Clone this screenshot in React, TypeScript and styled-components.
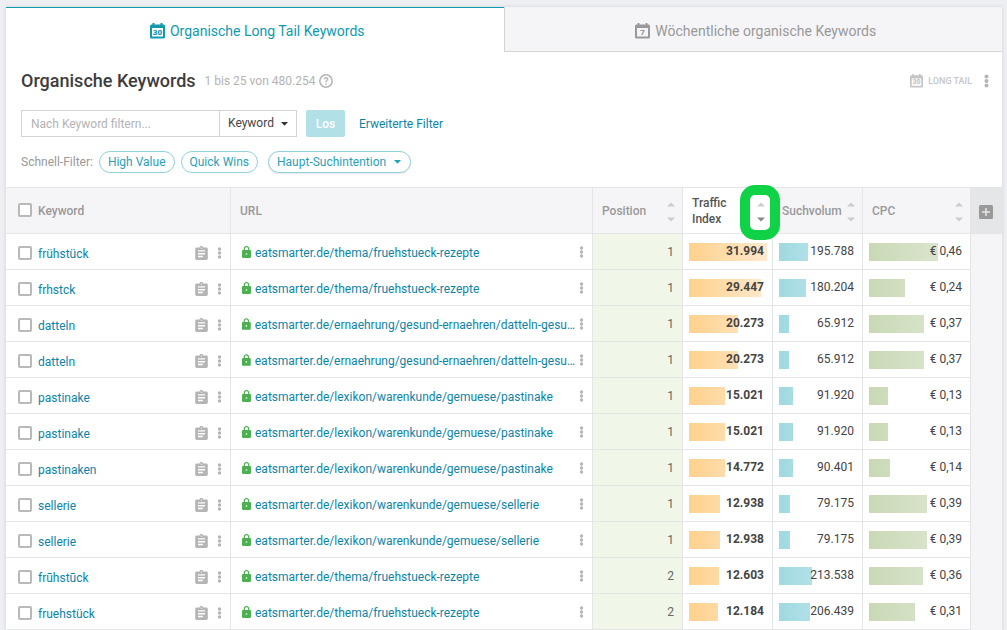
import React from 'react';
import styled, { createGlobalStyle, css } from 'styled-components';

const GlobalStyle = createGlobalStyle`
  *, *::before, *::after { box-sizing: border-box; }
  body {
    margin: 0;
    background: #eeeff2;
    color: #444;
    font-family: Roboto, "Liberation Sans", sans-serif;
    font-size: 12px;
    line-height: 16px;
  }
  button, input, select { font: inherit; margin: 0; }
  a { color: #0d84a5; text-decoration: none; }
`;

const Page = styled.main`
  padding: 7px 5px 0 6px;
`;

const Card = styled.section`
  background: #fff;
  box-shadow: 0 0 4px rgba(0, 0, 0, 0.12);
`;

const Tabs = styled.nav`
  display: flex;
`;

const Tab = styled.button<{ $active?: boolean }>`
  flex: 1;
  display: flex;
  align-items: center;
  justify-content: center;
  gap: 5px;
  height: 45px;
  border: 0;
  font-size: 14px;
  cursor: pointer;
  ${({ $active }) =>
    $active
      ? css`
          padding: 1px 0 0 5px;
          background: #fff;
          color: #0e9aaf;
          border-top: 1px solid #0e9aaf;
        `
      : css`
          padding: 3px 0 0 5px;
          background: #f5f5f8;
          color: #999;
          border-left: 1px solid #d3d4d6;
          border-bottom: 1px solid #d3d4d6;
        `}
`;

const TitleBar = styled.header`
  display: flex;
  align-items: center;
  height: 28px;
  margin-top: 15px;
  padding: 0 13px 0 15px;
`;

const Title = styled.h1`
  margin: 0;
  color: #3d3d3d;
  font-size: 18px;
  font-weight: 500;
  line-height: 24px;
`;

const Count = styled.span`
  margin: 0 4px 0 9px;
  color: #b3b3b3;
`;

const IconButton = styled.button`
  display: flex;
  padding: 0;
  border: 0;
  background: none;
  color: #b5b5b5;
  cursor: pointer;
`;

const LongTail = styled.span`
  display: flex;
  align-items: center;
  gap: 5px;
  margin-left: auto;
  margin-right: 12px;
  color: #c6c6c6;
  font-size: 9px;
  font-weight: 500;
`;

const FilterForm = styled.form`
  display: flex;
  align-items: center;
  height: 27px;
  margin: 15px 15px 0;
`;

const SearchInput = styled.input`
  width: 198px;
  height: 27px;
  padding: 0 9px;
  border: 1px solid #d3d4d6;
  border-right: 0;
  border-radius: 0;
  background: #fff;
  color: #444;
  outline: 0;
  &::placeholder { color: #b3b3b3; opacity: 1; }
`;

const SelectBox = styled.span<{ $pill?: boolean }>`
  display: grid;
  align-items: center;
  > * { grid-area: 1 / 1; }
  > svg {
    justify-self: end;
    margin-right: ${({ $pill }) => ($pill ? 10 : 9)}px;
    color: ${({ $pill }) => ($pill ? '#1fa3b8' : '#333')};
    pointer-events: none;
  }
`;

const FieldSelect = styled.select`
  appearance: none;
  width: 78px;
  height: 27px;
  padding: 0 8px 1px;
  border: 1px solid #d3d4d6;
  border-radius: 0;
  background: #fff;
  color: #444;
`;

const SubmitButton = styled.button`
  width: 39px;
  height: 27px;
  margin: 0 14px 0 9px;
  padding: 0;
  border: 0;
  border-radius: 2px;
  background: #b1e0e6;
  color: #fff;
  font-weight: 500;
`;

const QuickFilters = styled.div`
  display: flex;
  align-items: center;
  height: 22px;
  margin: 14px 15px;
  color: #999;
`;

const pill = css`
  height: 22px;
  border: 1px solid #8fd2dc;
  border-radius: 11px;
  background: #fff;
  color: #2b9fb5;
`;

const PillButton = styled.button`
  ${pill}
  padding: 0 8px;
  margin-left: 6px;
`;

const PillSelect = styled.select`
  ${pill}
  appearance: none;
  width: 143px;
  padding: 0 8px;
  box-shadow: 0 1px 2px rgba(0, 0, 0, 0.1);
`;

const PillSelectSlot = styled.label`
  margin-left: 10px;
`;

const Table = styled.table`
  width: 100%;
  table-layout: fixed;
  border-collapse: separate;
  border-spacing: 0;
  border-top: 1px solid #e4e5e7;
`;

const Col = styled.col<{ $width?: number }>`
  width: ${({ $width }) => ($width ? `${$width}px` : 'auto')};
`;

const HeadCell = styled.th<{ $tone?: 'active' | 'add' }>`
  position: relative;
  height: 46px;
  padding: 0 7px 0 9px;
  border-right: 1px solid #e4e5e7;
  border-bottom: 1px solid #e4e5e7;
  background: #f5f5f8;
  color: #999;
  font-weight: 500;
  text-align: left;
  ${({ $tone }) => $tone === 'active' && css`background: #fff; color: #555; z-index: 1;`}
  ${({ $tone }) => $tone === 'add' && css`background: #e4e6e8; border-color: #e4e6e8; padding: 2px 0 0 8px;`}
`;

const HeadInner = styled.div`
  display: flex;
  align-items: center;
  justify-content: space-between;
`;

const SortArrows = styled.button`
  display: flex;
  padding: 2px 0 0;
  border: 0;
  background: none;
  cursor: pointer;
`;

const Highlight = styled.span`
  position: absolute;
  top: -3px;
  right: -8px;
  width: 40px;
  height: 55px;
  border: 10px solid #0fd246;
  border-radius: 15px;
  pointer-events: none;
`;

const Cell = styled.td<{ $tone?: 'position' | 'rest' }>`
  height: 36px;
  padding: 0;
  border-right: 1px solid #e4e5e7;
  border-bottom: 1px solid #e4e5e7;
  ${({ $tone }) => $tone === 'position' && css`
    padding: 1px 8px 0 0;
    background: #f0f6e8;
    color: #666;
    text-align: right;
  `}
  ${({ $tone }) => $tone === 'rest' && css`background: #f5f5f8; border-color: #f5f5f8;`}
`;

const KeywordInner = styled.div<{ $head?: boolean }>`
  display: flex;
  align-items: center;
  padding: ${({ $head }) => ($head ? '0 0 0 3px' : '2px 8px 0 12px')};
  > input { margin: ${({ $head }) => ($head ? '0 6px 2px 0' : '0 6px 0 0')}; }
  > a { flex: 1; padding-top: 2px; }
  > button + button { margin-left: 9px; }
`;

const UrlInner = styled.div`
  display: flex;
  align-items: center;
  gap: 4px;
  padding: 1px 8px 0 11px;
  > a { flex: 1; padding-top: 2px; white-space: nowrap; }
`;

const Checkbox = styled.input`
  appearance: none;
  flex: none;
  width: 14px;
  height: 14px;
  border: 2px solid #b9b9b9;
  border-radius: 2px;
  background: #fff;
`;

const Meter = styled.div`
  display: grid;
  align-items: center;
  height: 18px;
  margin: 0 5px 0 6px;
  > * { grid-area: 1 / 1; }
`;

const barTones = {
  orange: '#ffd18c, #ffe9ce',
  blue: '#9fd9e1, #cdebef',
  green: '#c9d9b5, #e1e9d6',
};

const Bar = styled.span<{ $tone: keyof typeof barTones; $track: number }>`
  height: 18px;
  background: linear-gradient(to right, ${({ $tone }) => barTones[$tone]}) no-repeat;
  background-size: ${({ $track }) => $track}px 18px;
`;

const Amount = styled.span<{ $bold?: boolean }>`
  justify-self: end;
  margin: 0 3px 2px 0;
  font-weight: ${({ $bold }) => ($bold ? 700 : 400)};
  white-space: nowrap;
`;

const CalendarIcon = ({ day, size }: { day: string; size: number }) => (
  <svg width={size} height={size + 1} viewBox="0 0 15 16" aria-hidden="true">
    <path
      fill="currentColor"
      fillRule="evenodd"
      d="M2.500 0h2v1.500h6V0h2v1.500h1a1.500 1.500 0 0 1 1.500 1.500v11a1.500 1.500 0 0 1-1.500 1.500h-12A1.500 1.500 0 0 1 0 14V3a1.500 1.500 0 0 1 1.500-1.500h1zM2 5v8.500h11V5z"
    />
    <text x="7.500" y="12" textAnchor="middle" fontSize="8" fontWeight="900" fill="currentColor">
      {day}
    </text>
  </svg>
);

const HelpIcon = () => (
  <svg width="14" height="14" viewBox="0 0 14 14" aria-hidden="true">
    <circle cx="7" cy="7" r="6.200" fill="none" stroke="currentColor" strokeWidth="1.500" />
    <text x="7" y="10.500" textAnchor="middle" fontSize="10" fontWeight="700" fill="currentColor">?</text>
  </svg>
);

const DotsIcon = ({ large }: { large?: boolean }) => {
  const r = large ? 2 : 1.7;
  const step = large ? 4.5 : 4;
  return (
    <svg width="5" height="14" viewBox="0 0 5 14" fill="currentColor" aria-hidden="true">
      <circle cx="2.500" cy={7 - step} r={r} />
      <circle cx="2.500" cy="7" r={r} />
      <circle cx="2.500" cy={7 + step} r={r} />
    </svg>
  );
};

const CaretIcon = () => (
  <svg width="7" height="4" viewBox="0 0 7 4" aria-hidden="true">
    <path d="M0 0h7L3.500 3.700z" fill="currentColor" />
  </svg>
);

const ClipboardIcon = () => (
  <svg width="13" height="14" viewBox="3 1 18 20" aria-hidden="true">
    <path
      fill="currentColor"
      d="M19 3h-4.180C14.400 1.840 13.300 1 12 1c-1.300 0-2.400.84-2.820 2H5c-1.100 0-2 .9-2 2v14c0 1.100.9 2 2 2h14c1.100 0 2-.9 2-2V5c0-1.100-.9-2-2-2zm-7 0c.55 0 1 .45 1 1s-.45 1-1 1-1-.45-1-1 .45-1 1-1zm2 14H7v-2h7v2zm3-4H7v-2h10v2zm0-4H7V7h10v2z"
    />
  </svg>
);

const LockIcon = () => (
  <svg width="9" height="12" viewBox="4 1 16 21" aria-hidden="true">
    <path
      fill="#4caf50"
      d="M18 8h-1V6c0-2.760-2.240-5-5-5S7 3.240 7 6v2H6c-1.100 0-2 .9-2 2v10c0 1.100.9 2 2 2h12c1.100 0 2-.9 2-2V10c0-1.100-.9-2-2-2zm-6 8.500c-.8 0-1.500-.7-1.500-1.500s.7-1.500 1.500-1.500 1.500.7 1.500 1.500-.7 1.500-1.500 1.500zm2.800-8.500H9.200V6c0-1.550 1.250-2.800 2.800-2.800s2.800 1.250 2.800 2.800v2z"
    />
  </svg>
);

const SortIcon = ({ down }: { down?: boolean }) => (
  <svg width="8" height="20" viewBox="0 0 8 20" aria-hidden="true">
    <path d="M0 4.500 4 .5l4 4z" fill="#ccc" />
    <path d="M0 15.500h8l-4 4z" fill={down ? '#888' : '#ccc'} />
  </svg>
);

const PlusIcon = () => (
  <svg width="14" height="14" viewBox="0 0 14 14" aria-hidden="true">
    <rect width="14" height="14" rx="1.500" fill="#999" />
    <path d="M7 3v8M3 7h8" stroke="#e8e8ea" strokeWidth="1.500" />
  </svg>
);

type Row = {
  keyword: string;
  url: string;
  position: number;
  traffic: [string, number];
  volume: [string, number];
  cpc: [string, number];
};

const DATTELN = 'eatsmarter.de/ernaehrung/gesund-ernaehren/datteln-gesu…';
const PASTINAKE = 'eatsmarter.de/lexikon/warenkunde/gemuese/pastinake';
const SELLERIE = 'eatsmarter.de/lexikon/warenkunde/gemuese/sellerie';
const FRUEHSTUECK = 'eatsmarter.de/thema/fruehstueck-rezepte';

const TRACK = 78;
const CPC_TRACK = 96;

// Each measure pairs its label with the bar length inside the column's track.
const rows: Row[] = [
  { keyword: 'frühstück', url: FRUEHSTUECK, position: 1, traffic: ['31.994', 78], volume: ['195.788', 29], cpc: ['€ 0,46', 69] },
  { keyword: 'frhstck', url: FRUEHSTUECK, position: 1, traffic: ['29.447', 72], volume: ['180.204', 27], cpc: ['€ 0,24', 36] },
  { keyword: 'datteln', url: DATTELN, position: 1, traffic: ['20.273', 49], volume: ['65.912', 10], cpc: ['€ 0,37', 55] },
  { keyword: 'datteln', url: DATTELN, position: 1, traffic: ['20.273', 49], volume: ['65.912', 10], cpc: ['€ 0,37', 55] },
  { keyword: 'pastinake', url: PASTINAKE, position: 1, traffic: ['15.021', 36], volume: ['91.920', 14], cpc: ['€ 0,13', 19] },
  { keyword: 'pastinake', url: PASTINAKE, position: 1, traffic: ['15.021', 36], volume: ['91.920', 14], cpc: ['€ 0,13', 19] },
  { keyword: 'pastinaken', url: PASTINAKE, position: 1, traffic: ['14.772', 36], volume: ['90.401', 14], cpc: ['€ 0,14', 21] },
  { keyword: 'sellerie', url: SELLERIE, position: 1, traffic: ['12.938', 31], volume: ['79.175', 11], cpc: ['€ 0,39', 58] },
  { keyword: 'sellerie', url: SELLERIE, position: 1, traffic: ['12.938', 31], volume: ['79.175', 11], cpc: ['€ 0,39', 58] },
  { keyword: 'frūhstūck', url: FRUEHSTUECK, position: 2, traffic: ['12.603', 30], volume: ['213.538', 33], cpc: ['€ 0,36', 54] },
  { keyword: 'fruehstück', url: FRUEHSTUECK, position: 2, traffic: ['12.184', 29], volume: ['206.439', 31], cpc: ['€ 0,31', 46] },
];

type MeasureProps = { measure: [string, number]; tone: keyof typeof barTones; track: number; bold?: boolean };

const Measure = ({ measure: [label, length], tone, track, bold }: MeasureProps) => (
  <Cell>
    <Meter>
      <Bar $tone={tone} $track={track} style={{ width: `${(length / track) * 100}%` }} />
      <Amount $bold={bold}>{label}</Amount>
    </Meter>
  </Cell>
);

const SortableHead = ({ label, active }: { label: React.ReactNode; active?: boolean }) => (
  <HeadCell scope="col" $tone={active ? 'active' : undefined}>
    <HeadInner>
      <span>{label}</span>
      <SortArrows type="button" aria-label="Sortieren">
        <SortIcon down={active} />
      </SortArrows>
    </HeadInner>
    {active && <Highlight />}
  </HeadCell>
);

export default function App() {
  return (
    <>
      <GlobalStyle />
      <Page>
        <Card>
          <Tabs>
            <Tab type="button" $active>
              <CalendarIcon day="30" size={15} />
              Organische Long Tail Keywords
            </Tab>
            <Tab type="button">
              <CalendarIcon day="7" size={15} />
              Wöchentliche organische Keywords
            </Tab>
          </Tabs>

          <TitleBar>
            <Title>Organische Keywords</Title>
            <Count>1 bis 25 von 480.254</Count>
            <IconButton type="button" aria-label="Hilfe">
              <HelpIcon />
            </IconButton>
            <LongTail>
              <CalendarIcon day="30" size={13} />
              LONG TAIL
            </LongTail>
            <IconButton type="button" aria-label="Menü">
              <DotsIcon large />
            </IconButton>
          </TitleBar>

          <FilterForm onSubmit={(e) => e.preventDefault()}>
            <SearchInput type="text" placeholder="Nach Keyword filtern..." aria-label="Nach Keyword filtern" />
            <SelectBox>
              <FieldSelect aria-label="Filterfeld">
                <option>Keyword</option>
              </FieldSelect>
              <CaretIcon />
            </SelectBox>
            <SubmitButton type="submit">Los</SubmitButton>
            <a href="#filter">Erweiterte Filter</a>
          </FilterForm>

          <QuickFilters>
            Schnell-Filter:
            <PillButton type="button">High Value</PillButton>
            <PillButton type="button">Quick Wins</PillButton>
            <PillSelectSlot>
              <SelectBox $pill>
                <PillSelect aria-label="Haupt-Suchintention">
                  <option>Haupt-Suchintention</option>
                </PillSelect>
                <CaretIcon />
              </SelectBox>
            </PillSelectSlot>
          </QuickFilters>

          <Table>
            <colgroup>
              <Col $width={225} />
              <Col />
              <Col $width={90} />
              <Col $width={90} />
              <Col $width={90} />
              <Col $width={108} />
              <Col $width={31} />
            </colgroup>
            <thead>
              <tr>
                <HeadCell scope="col">
                  <KeywordInner $head>
                    <Checkbox type="checkbox" aria-label="Alle auswählen" />
                    Keyword
                  </KeywordInner>
                </HeadCell>
                <HeadCell scope="col">URL</HeadCell>
                <SortableHead label="Position" />
                <SortableHead active label={<>Traffic<br />Index</>} />
                <SortableHead label="Suchvolum" />
                <SortableHead label="CPC" />
                <HeadCell scope="col" $tone="add">
                  <IconButton type="button" aria-label="Spalte hinzufügen">
                    <PlusIcon />
                  </IconButton>
                </HeadCell>
              </tr>
            </thead>
            <tbody>
              {rows.map((row, i) => (
                <tr key={i}>
                  <Cell>
                    <KeywordInner>
                      <Checkbox type="checkbox" aria-label={row.keyword} />
                      <a href="#keyword">{row.keyword}</a>
                      <IconButton type="button" aria-label="Details">
                        <ClipboardIcon />
                      </IconButton>
                      <IconButton type="button" aria-label="Menü">
                        <DotsIcon />
                      </IconButton>
                    </KeywordInner>
                  </Cell>
                  <Cell>
                    <UrlInner>
                      <LockIcon />
                      <a href="#url">{row.url}</a>
                      <IconButton type="button" aria-label="Menü">
                        <DotsIcon />
                      </IconButton>
                    </UrlInner>
                  </Cell>
                  <Cell $tone="position">{row.position}</Cell>
                  <Measure measure={row.traffic} tone="orange" track={TRACK} bold />
                  <Measure measure={row.volume} tone="blue" track={TRACK} />
                  <Measure measure={row.cpc} tone="green" track={CPC_TRACK} />
                  <Cell $tone="rest" />
                </tr>
              ))}
            </tbody>
          </Table>
        </Card>
      </Page>
    </>
  );
}
